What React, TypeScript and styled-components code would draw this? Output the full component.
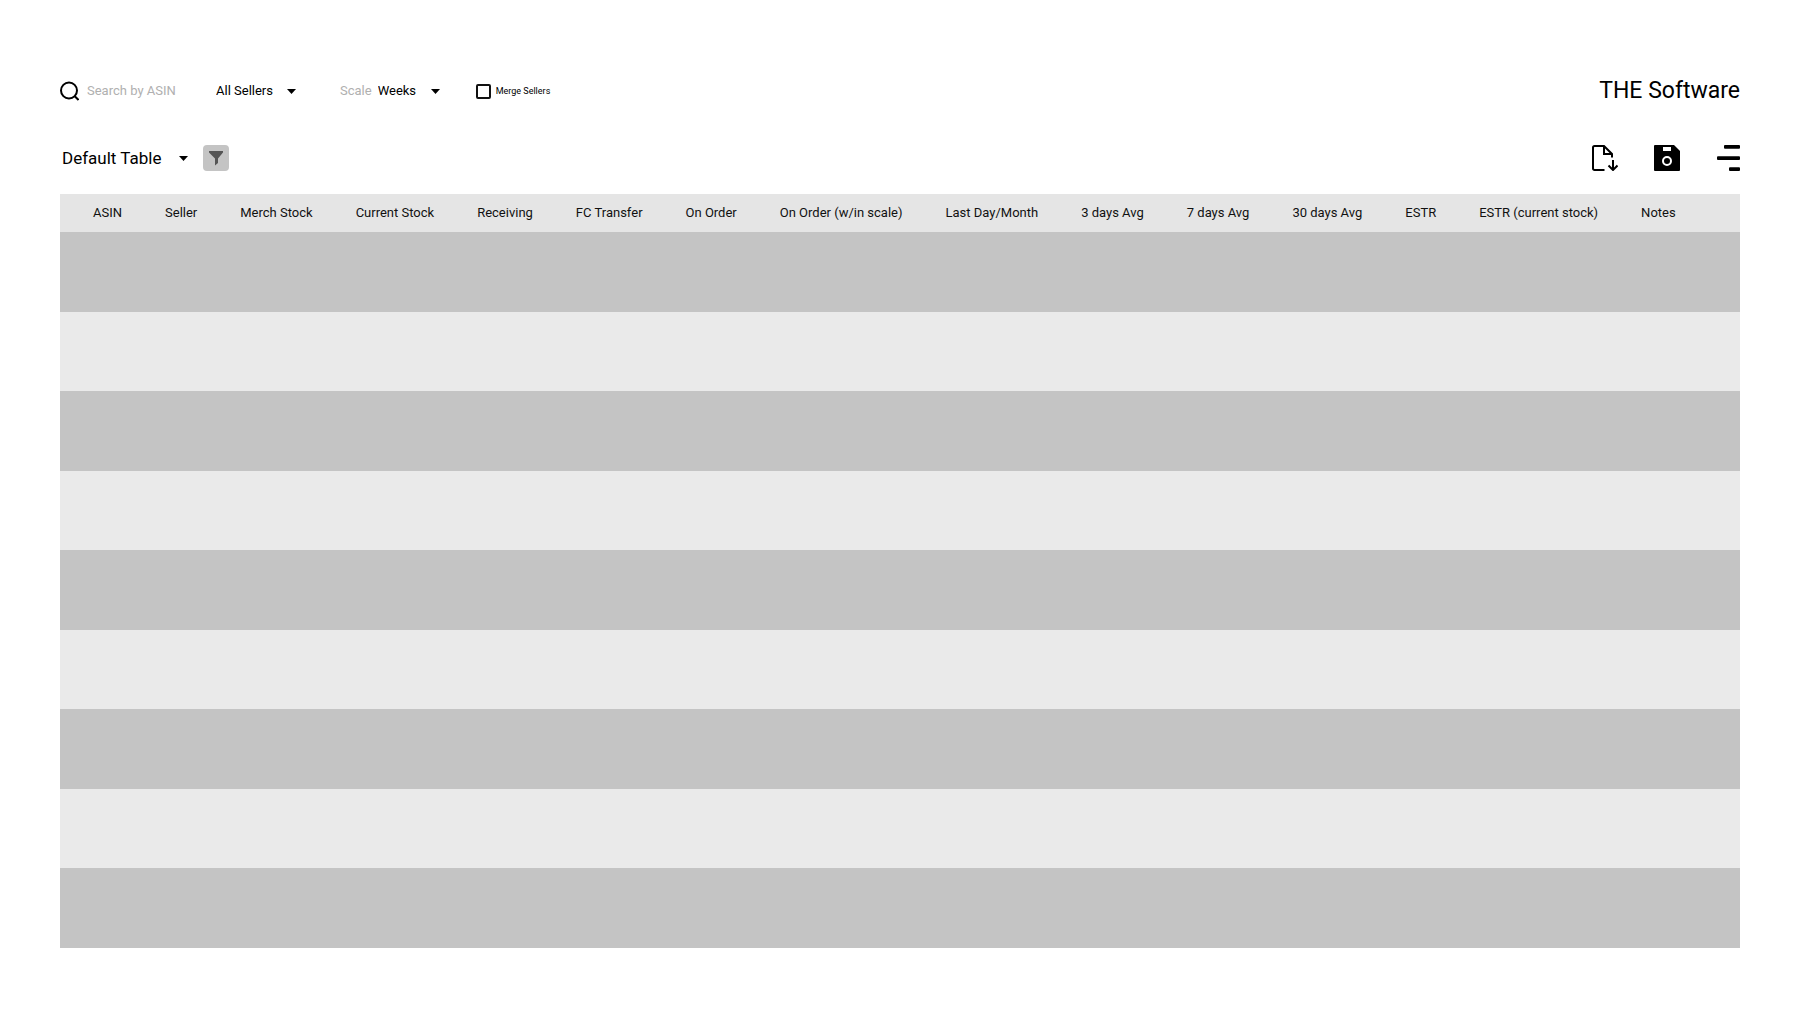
import React, { useState } from "react";
import styled, { createGlobalStyle } from "styled-components";

const GlobalStyle = createGlobalStyle`
  * { box-sizing: border-box; }
  body {
    margin: 0;
    background: #fff;
    color: #000;
    font-family: Roboto, "Liberation Sans", sans-serif;
  }
`;

const Page = styled.main`
  padding: 72px 60px 60px;
`;

const Bar = styled.div`
  display: flex;
  align-items: center;
  justify-content: space-between;
`;

const TopBar = styled(Bar)`
  height: 38px;
  margin-bottom: 26px;
`;

const TableBar = styled(Bar)`
  height: 44px;
  margin-bottom: 14px;
`;

const Group = styled.div<{ $gap: number }>`
  display: flex;
  align-items: center;
  gap: ${(p) => p.$gap}px;
`;

const Search = styled.label`
  display: flex;
  align-items: center;
  gap: 8px;
  width: 156px;
`;

const SearchInput = styled.input`
  flex: 1;
  min-width: 0;
  border: 0;
  padding: 0;
  outline: 0;
  background: none;
  font: 13px/20px Roboto, "Liberation Sans", sans-serif;
  &::placeholder { color: #b0b0b0; opacity: 1; }
`;

const Field = styled.div`
  display: flex;
  align-items: center;
  gap: 6px;
  padding-left: 8px;
`;

const FieldLabel = styled.label`
  color: #b0b0b0;
  font-size: 13px;
  line-height: 20px;
`;

const SelectBox = styled.span`
  display: grid;
  align-items: center;
  > * { grid-area: 1 / 1; }
  > svg { justify-self: end; pointer-events: none; }
`;

const Select = styled.select<{ $large?: boolean }>`
  appearance: none;
  border: 0;
  padding: ${(p) => (p.$large ? "0 26px 0 2px" : "0 23px 0 0")};
  background: none;
  color: #000;
  font-family: inherit;
  font-size: ${(p) => (p.$large ? 17 : 13)}px;
  line-height: 20px;
`;

const Merge = styled.label`
  display: flex;
  align-items: center;
  gap: 5px;
  font-size: 9px;
  line-height: 20px;
`;

const Checkbox = styled.input`
  appearance: none;
  width: 15px;
  height: 15px;
  margin: 0;
  border: 2px solid #111;
  border-radius: 2px;
  &:checked { background: #111; }
`;

const Brand = styled.h1`
  margin: 0;
  font-size: 23px;
  line-height: 32px;
  font-weight: 400;
`;

const IconButton = styled.button`
  display: grid;
  place-items: center;
  min-width: 24px;
  height: 26px;
  padding: 0;
  border: 0;
  background: none;
  color: #000;
`;

const FilterButton = styled(IconButton)`
  width: 26px;
  border-radius: 4px;
  background: #c4c4c4;
  color: #555;
`;

const Table = styled.table`
  width: 100%;
  height: 754px;
  border-collapse: collapse;
`;

const HeadCell = styled.th`
  height: 38px;
  padding: 0 22px 0 21px;
  background: #e5e5e5;
  color: #111;
  font-size: 13px;
  line-height: 20px;
  font-weight: 400;
  text-align: left;
  white-space: nowrap;
  &:first-child { padding-left: 33px; }
  &:last-child { width: 100%; }
`;

const Row = styled.tr`
  background: #eaeaea;
  &:nth-child(odd) { background: #c4c4c4; }
`;

const Cell = styled.td`
  padding: 0;
`;

const columns = [
  "ASIN", "Seller", "Merch Stock", "Current Stock", "Receiving", "FC Transfer",
  "On Order", "On Order (w/in scale)", "Last Day/Month", "3 days Avg",
  "7 days Avg", "30 days Avg", "ESTR", "ESTR (current stock)", "Notes",
];

const rows = Array.from({ length: 9 }, (_, i) => i);

const Caret = () => (
  <svg width="9" height="5" viewBox="0 0 9 5" aria-hidden="true">
    <path d="M0 0h9L4.500 5z" />
  </svg>
);

const SearchIcon = () => (
  <svg width="19" height="20" viewBox="0 0 19 20" fill="none" stroke="#000" strokeWidth="2" aria-hidden="true">
    <circle cx="9" cy="9.500" r="8" />
    <path d="M14.500 15l4 4" />
  </svg>
);

const FilterIcon = () => (
  <svg width="16" height="16" viewBox="0 0 16 16" fill="currentColor" aria-hidden="true">
    <path d="M1 1h14v1.500L10 8.500V13l-3 2.500V8.500L1 2.500z" />
  </svg>
);

const ExportIcon = () => (
  <svg width="26" height="26" viewBox="0 0 26 26" fill="none" stroke="currentColor" strokeWidth="2" aria-hidden="true">
    <path d="M12.500 25H2.500A1.500 1.500 0 0 1 1 23.500v-21A1.500 1.500 0 0 1 2.500 1H12l8 8v3.500M12 1v8h8" />
    <path d="M21 15v10M16.500 20.500L21 25l4.500-4.500" />
  </svg>
);

const SaveIcon = () => (
  <svg width="26" height="26" viewBox="0 0 26 26" aria-hidden="true">
    <path d="M1 0h19l6 6v19a1 1 0 0 1-1 1H1a1 1 0 0 1-1-1V1a1 1 0 0 1 1-1z" />
    <path fill="#fff" d="M9 2h8v4H9z" />
    <circle cx="13" cy="16" r="4" fill="none" stroke="#fff" strokeWidth="2" />
  </svg>
);

const MenuIcon = () => (
  <svg width="24" height="26" viewBox="0 0 24 26" aria-hidden="true">
    <rect x="8" y="0" width="16" height="3.700" rx="1" />
    <rect x="1" y="11.300" width="23" height="3.700" rx="1" />
    <rect x="13" y="22.300" width="11" height="3.700" rx="1" />
  </svg>
);

export default function App() {
  const [merged, setMerged] = useState(false);
  return (
    <>
      <GlobalStyle />
      <Page>
        <TopBar>
          <Group $gap={36}>
            <Group $gap={0}>
              <Search>
                <SearchIcon />
                <SearchInput type="text" placeholder="Search by ASIN" aria-label="Search by ASIN" />
              </Search>
              <SelectBox>
                <Select aria-label="Sellers">
                  <option>All Sellers</option>
                </Select>
                <Caret />
              </SelectBox>
            </Group>
            <Field>
              <FieldLabel htmlFor="scale">Scale</FieldLabel>
              <SelectBox>
                <Select id="scale">
                  <option>Weeks</option>
                </Select>
                <Caret />
              </SelectBox>
            </Field>
            <Merge>
              <Checkbox type="checkbox" checked={merged} onChange={(e) => setMerged(e.target.checked)} />
              Merge Sellers
            </Merge>
          </Group>
          <Brand>THE Software</Brand>
        </TopBar>
        <TableBar>
          <Group $gap={15}>
            <SelectBox>
              <Select $large aria-label="Table">
                <option>Default Table</option>
              </Select>
              <Caret />
            </SelectBox>
            <FilterButton type="button" aria-label="Filter"><FilterIcon /></FilterButton>
          </Group>
          <Group $gap={36}>
            <IconButton type="button" aria-label="Export"><ExportIcon /></IconButton>
            <IconButton type="button" aria-label="Save"><SaveIcon /></IconButton>
            <IconButton type="button" aria-label="Menu"><MenuIcon /></IconButton>
          </Group>
        </TableBar>
        <Table>
          <thead>
            <tr>{columns.map((c) => <HeadCell key={c} scope="col">{c}</HeadCell>)}</tr>
          </thead>
          <tbody>
            {rows.map((r) => <Row key={r}><Cell colSpan={columns.length} /></Row>)}
          </tbody>
        </Table>
      </Page>
    </>
  );
}
